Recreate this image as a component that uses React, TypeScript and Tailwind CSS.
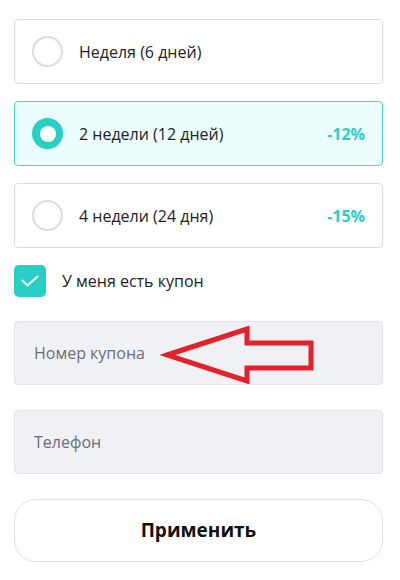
import React from "react";

type Plan = {
  id: string;
  label: string;
  discount?: string;
};

const plans: Plan[] = [
  { id: "week", label: "Неделя (6 дней)" },
  { id: "two", label: "2 недели (12 дней)", discount: "-12%" },
  { id: "four", label: "4 недели (24 дня)", discount: "-15%" },
];

const App = () => {
  const [selected, setSelected] = React.useState<string>("two");
  const [hasCoupon, setHasCoupon] = React.useState<boolean>(true);

  return (
    <div
      className="w-[400px] h-[580px] bg-white pt-[19px] px-[14px]"
      style={{ fontFamily: '"Open Sans", "Noto Sans", sans-serif' }}
    >
      <div className="w-[369px] flex flex-col">
        <div className="flex flex-col gap-[17px]">
          {plans.map((plan) => {
            const active = plan.id === selected;
            return (
              <button
                key={plan.id}
                onClick={() => setSelected(plan.id)}
                className={`h-[65px] flex items-center justify-between pl-[17px] pr-[17px] rounded-[4px] border text-left ${
                  active
                    ? "bg-[#ebfefd] border-[#4fd2ca]"
                    : "bg-white border-[#dedee2]"
                }`}
              >
                <div className="flex items-center gap-[16px]">
                  {active ? (
                    <span className="w-[31px] h-[31px] rounded-full bg-[#27cfc5] flex items-center justify-center">
                      <span className="w-[16px] h-[16px] rounded-full bg-white" />
                    </span>
                  ) : (
                    <span className="w-[31px] h-[31px] rounded-full border-2 border-[#dcdce2] bg-white" />
                  )}
                  <span className="text-[16px] text-[#222222]">{plan.label}</span>
                </div>
                {plan.discount && (
                  <span className="text-[16px] font-bold text-[#27cfc5]">
                    {plan.discount}
                  </span>
                )}
              </button>
            );
          })}
        </div>

        <label className="mt-[17px] flex items-center gap-[16px] cursor-pointer">
          <button
            onClick={() => setHasCoupon(!hasCoupon)}
            className={`w-[32px] h-[32px] rounded-[5px] flex items-center justify-center ${
              hasCoupon ? "bg-[#27cfc5]" : "border-2 border-[#dcdce2]"
            }`}
          >
            {hasCoupon && (
              <svg width="18" height="12" viewBox="0 0 18 12" fill="none">
                <path
                  d="M1.5 5.5 L6.5 10.5 L16.5 1.5"
                  stroke="white"
                  strokeWidth="2"
                  strokeLinecap="round"
                  strokeLinejoin="round"
                />
              </svg>
            )}
          </button>
          <span className="text-[16px] text-[#222222]">У меня есть купон</span>
        </label>

        <div className="relative mt-[24px]">
          <input
            placeholder="Номер купона"
            className="w-full h-[64px] rounded-[4px] border border-[#e2e3e8] bg-[#f0f1f5] px-[19px] text-[16px] text-[#222222] placeholder:text-[#6b6e76] outline-none"
          />
          <svg
            className="absolute left-[146px] top-[3px] pointer-events-none"
            width="156"
            height="60"
            viewBox="0 0 156 60"
            fill="none"
          >
            <polygon
              points="7,31 87,5 87,19 151,19 151,44 87,44 87,57"
              stroke="#e3212a"
              strokeWidth="5"
              strokeLinejoin="miter"
            />
          </svg>
        </div>

        <input
          placeholder="Телефон"
          className="mt-[25px] w-full h-[64px] rounded-[4px] border border-[#e2e3e8] bg-[#f0f1f5] px-[19px] text-[16px] text-[#222222] placeholder:text-[#6b6e76] outline-none"
        />

        <button className="mt-[25px] h-[63px] w-full rounded-[22px] border border-[#e0e0e4] bg-white text-[19px] font-bold text-[#111111]">
          Применить
        </button>
      </div>
    </div>
  );
};

export default App;
